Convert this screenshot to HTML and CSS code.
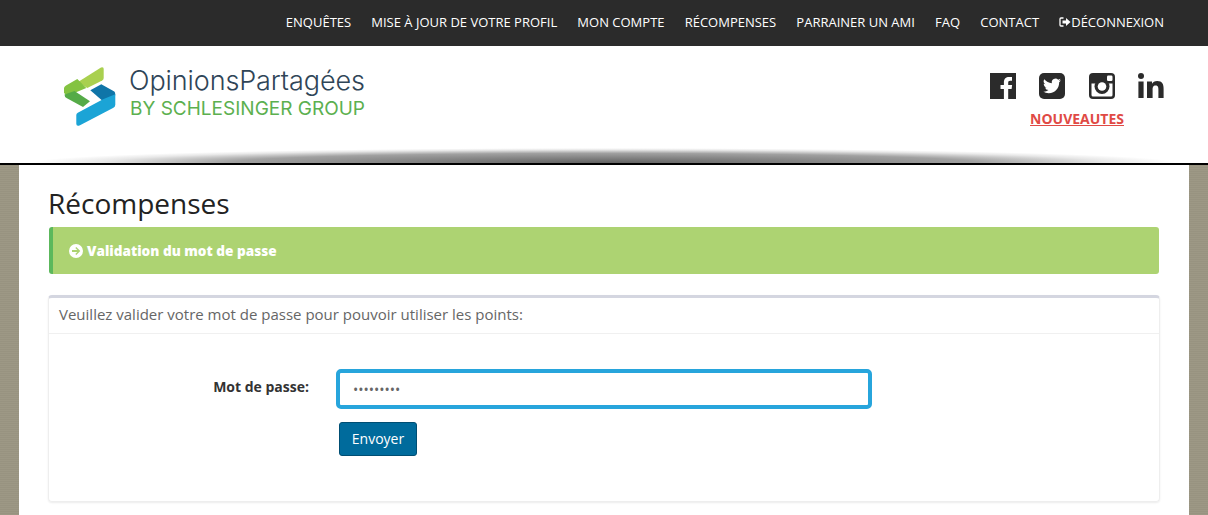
FILE: index.html
```html
<!DOCTYPE html>
<html lang="fr">
<head>
<meta charset="utf-8">
<title>Récompenses</title>
<link rel="stylesheet" href="styles.css">
</head>
<body>
<nav class="topbar">
  <a href="#">Enquêtes</a>
  <a href="#">Mise à jour de votre profil</a>
  <a href="#">Mon compte</a>
  <a href="#">Récompenses</a>
  <a href="#">Parrainer un ami</a>
  <a href="#">FAQ</a>
  <a href="#">Contact</a>
  <a href="#" class="logout"><svg class="logout-icon" viewBox="0 0 12 10" width="12" height="10"><path d="M4.500 1H2a1 1 0 0 0-1 1v6a1 1 0 0 0 1 1h2.500" fill="none" stroke="#fff" stroke-width="1.300"/><path d="M3.500 3.500H7V1l4.500 4L7 9V6.500H3.500z" fill="#fff"/></svg>Déconnexion</a>
</nav>
<header class="masthead">
  <div class="masthead-shadow"></div>
  <div class="brand">
    <svg class="brand-mark" viewBox="0 0 70 70" width="70" height="70">
      <path d="M20 20 43 5.500q2.700-1 2.700 1.500v9q0 1.500-1.500 2.500L29.300 26z" fill="#a9d04f"/>
      <path d="M6 26q.2-1.500 2-2.500l11.300-6.500 9 9-12 5-8 2-2.300-2z" fill="#84c341"/>
      <path d="M6.500 32.500l10-3.500L32 39.300 25 45 8.500 36q-2-1.200-2-3.500z" fill="#55ab47"/>
      <path d="M32.300 28.300l11-6 13 7.300q1 .8 1 3.700L45 39.300z" fill="#0f75a8"/>
      <path d="M57.300 32.300v10.400q0 2.300-2.300 3.300L22 63.300q-3.700 1.500-3.700-1.500V53q0-1.300 1.500-2.300L45 37.300z" fill="#1ba4d6"/>
    </svg>
    <div class="brand-text">
      <div class="brand-name">OpinionsPartagées</div>
      <div class="brand-sub">BY SCHLESINGER GROUP</div>
    </div>
  </div>
  <div class="social">
    <div class="social-icons">
      <svg viewBox="0 0 26 26" width="26" height="26"><path fill="#2b2b2b" d="M0 0h26v26h-7.800V16h3.400l.5-4h-3.900V9.600c0-1.150.32-1.950 1.980-1.950H22V4.100c-.36-.05-1.600-.15-3-.15-3 0-5.100 1.830-5.100 5.200V12h-3.400v4h3.400v10H0z"/></svg>
      <svg viewBox="0 0 26 26" width="26" height="26"><rect width="26" height="26" rx="5" fill="#2b2b2b"/><path fill="#fff" d="M22 7.300c-.66.300-1.370.5-2.120.6.760-.46 1.350-1.180 1.620-2.040-.71.420-1.500.730-2.340.900a3.700 3.700 0 0 0-6.300 3.370A10.500 10.500 0 0 1 5.260 6.270a3.700 3.700 0 0 0 1.140 4.930c-.6-.02-1.170-.18-1.670-.46v.05a3.700 3.700 0 0 0 2.960 3.620c-.54.150-1.120.170-1.670.06a3.700 3.700 0 0 0 3.450 2.570A7.420 7.420 0 0 1 4 18.580 10.470 10.470 0 0 0 9.660 20.240c6.800 0 10.510-5.630 10.510-10.510l-.01-.48c.72-.52 1.350-1.170 1.840-1.950z"/></svg>
      <svg viewBox="0 0 26 26" width="26" height="26"><rect width="26" height="26" rx="4" fill="#2b2b2b"/><path fill="#fff" d="M2.500 10.500h21V22a1.500 1.500 0 0 1-1.500 1.500H4A1.500 1.500 0 0 1 2.500 22z"/><circle cx="13" cy="13.500" r="7.500" fill="#2b2b2b"/><circle cx="13" cy="13.500" r="4.300" fill="#fff"/><rect x="18" y="2.500" width="5.500" height="5.500" rx="1.200" fill="#fff"/></svg>
      <svg viewBox="0 0 26 26" width="26" height="26"><circle cx="3" cy="3" r="3" fill="#2b2b2b"/><path fill="#2b2b2b" d="M.4 8.500h5.200V25H.4zM9 8.500h5v2.300c.8-1.400 2.600-2.700 5.200-2.700 5.200 0 6.400 3.300 6.400 7.700V25h-5.200v-8.200c0-2-.1-4.300-2.700-4.300-2.700 0-3.100 2-3.100 4.200V25H9z"/></svg>
    </div>
    <a href="#" class="news">NOUVEAUTES</a>
  </div>
</header>
<main class="page">
  <h1 class="title">Récompenses</h1>
  <div class="alert">
    <svg class="alert-icon" viewBox="0 0 14 14" width="14" height="14"><path fill="#fff" fill-rule="evenodd" d="M7 0a7 7 0 1 1 0 14A7 7 0 0 1 7 0zM7.300 3 6.300 4l2 2H3v2h5.300l-2 2 1 1 4-4z"/></svg>
    <span>Validation du mot de passe</span>
  </div>
  <section class="panel">
    <div class="panel-head">Veuillez valider votre mot de passe pour pouvoir utiliser les points:</div>
    <form class="panel-body">
      <div class="field">
        <label class="field-label" for="pw">Mot de passe:</label>
        <input class="field-input" id="pw" type="password" value="password1">
      </div>
      <div class="actions"><button type="button" class="submit">Envoyer</button></div>
    </form>
  </section>
</main>
</body>
</html>
```

FILE: styles.css
```css
* { box-sizing: border-box; }
html, body { margin: 0; height: 515px; overflow: hidden; }
body {
  font-family: "Open Sans", sans-serif;
  font-size: 14px;
  color: #333;
  background-color: #9b9683;
  background-image: repeating-linear-gradient(0deg, rgba(255,255,255,.02) 0 1px, rgba(0,0,0,.02) 1px 2px);
}
.topbar {
  height: 46px;
  background: #2b2b2b;
  display: flex;
  justify-content: flex-end;
  align-items: center;
  gap: 20.15px;
  padding: 0 44px 2px 0;
}
.topbar a {
  color: #fff;
  font-size: 13px;
  text-transform: uppercase;
  text-decoration: none;
  line-height: 44px;
}
.logout { display: flex; align-items: center; }
.logout-icon { display: block; }
.masthead {
  position: relative;
  height: 119px;
  background: #fff;
  border-bottom: 2px solid #000;
  display: flex;
  justify-content: space-between;
  padding: 16px 44px 0 58px;
}
.brand { position: relative; display: flex; align-items: flex-start; gap: 1px; }
.brand-mark { display: block; flex: none; }
.brand-text { margin-top: 2px; }
.brand-name {
  font-family: Inter, sans-serif;
  font-weight: 300;
  font-size: 27px;
  line-height: 33px;
  color: #2f4557;
  letter-spacing: -.1px;
  white-space: nowrap;
}
.brand-sub {
  font-family: Inter, sans-serif;
  font-size: 19px;
  line-height: 23px;
  color: #5cb04f;
  margin-left: 1px;
  white-space: nowrap;
}
.social { position: relative; display: flex; flex-direction: column; align-items: center; margin-top: 11px; }
.social-icons { display: flex; gap: 23.33px; }
.social-icons svg { display: block; }
.news {
  margin-top: 10px;
  font-size: 14px;
  line-height: 20px;
  font-weight: 700;
  color: #e04a45;
}
.masthead-shadow {
  position: absolute;
  left: 30px;
  right: 30px;
  bottom: 0;
  height: 15px;
  background: radial-gradient(50% 100% at 50% 100%, rgba(70,70,70,.85) 0%, rgba(110,110,110,.65) 65%, rgba(190,190,190,.35) 88%, rgba(255,255,255,0) 100%);
}
.page {
  width: 1170px;
  height: 350px;
  margin: 0 0 0 19px;
  background: #fff;
  padding: 20px 30px 0;
}
.title {
  margin: 0 0 5px -1px;
  font-size: 28px;
  line-height: 37px;
  font-weight: 400;
  color: #222;
}
.alert {
  height: 47px;
  display: flex;
  align-items: center;
  gap: 4px;
  padding-left: 16px;
  background: #add372;
  border-left: 4px solid #5cb85c;
  border-radius: 3px;
  color: #fff;
  font-weight: 800;
  font-size: 13.6px;
}
.alert-icon { display: block; }
.panel {
  margin: 21px -1px 0;
  height: 207px;
  border: 1px solid #eee;
  border-top: 3px solid #d4d6e0;
  border-radius: 4px;
  box-shadow: 0 1px 2px rgba(0,0,0,.08);
}
.panel-head {
  height: 36px;
  padding: 0 10px;
  line-height: 33px;
  border-bottom: 1px solid #f0f0f0;
  color: #666;
  font-size: 15px;
}
.panel-body { padding-top: 35px; }
.field { display: flex; align-items: center; }
.field-label {
  width: 260px;
  text-align: right;
  font-weight: 700;
  padding-bottom: 6px;
}
.field-input {
  width: 536px;
  height: 40px;
  margin-left: 27px;
  border: 4px solid #27a5dc;
  border-radius: 5px;
  padding: 0 13px;
  outline: none;
  font-family: "Open Sans", sans-serif;
  font-size: 14px;
  color: #666;
  background: #fff;
}
.actions { margin: 13px 0 0 290px; }
.submit {
  width: 78px;
  height: 34px;
  background: #006b9c;
  border: 1px solid #004e73;
  border-radius: 3px;
  color: #fff;
  font-family: "Open Sans", sans-serif;
  font-size: 14px;
  padding: 0 0 2px;
}
```
